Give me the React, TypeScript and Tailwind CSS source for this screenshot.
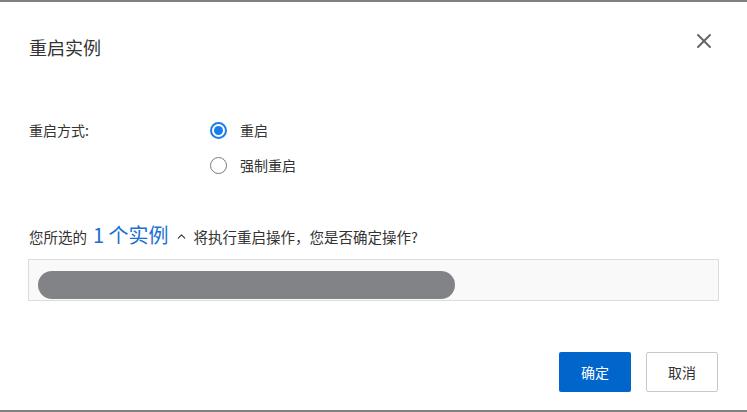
import React from 'react';
import { X, ChevronUp } from 'lucide-react';

const font = { fontFamily: '"Noto Sans CJK SC", "Noto Sans", sans-serif' };

const Radio: React.FC<{ checked?: boolean; label: string }> = ({ checked, label }) => (
  <label className="flex items-center h-[18px]">
    <span
      className={`w-[17px] h-[17px] rounded-full border flex items-center justify-center ${
        checked ? 'border-[#1a7fe8] border-2' : 'border-[#7a7a7a]'
      }`}
    >
      {checked && <span className="w-[9px] h-[9px] rounded-full bg-[#1a7fe8]" />}
    </span>
    <span className="ml-[13px] text-[14px] text-[#333]">{label}</span>
  </label>
);

export default function App() {
  return (
    <div className="w-[747px] h-[412px] bg-[#808080] flex flex-col overflow-hidden" style={font}>
      <div className="mt-[2px] mb-[2px] flex-1 bg-white flex flex-col">
        {/* Header */}
        <div className="flex items-center justify-between pl-[29px] pr-[31px] pt-[34px]">
          <h2 className="text-[18px] leading-[22px] text-[#333] font-normal">重启实例</h2>
          <X size={24} strokeWidth={2} className="text-[#666] -mt-[12px]" />
        </div>

        {/* Restart mode */}
        <div className="flex pl-[29px] mt-[63px]">
          <div className="w-[181px] text-[14px] text-[#333] leading-[18px]">重启方式:</div>
          <div className="flex flex-col gap-[17px]">
            <Radio checked label="重启" />
            <Radio label="强制重启" />
          </div>
        </div>

        {/* Confirm text */}
        <div className="pl-[29px] mt-[49px] flex items-end text-[14.5px] text-[#333] leading-[20px]">
          <span>您所选的</span>
          <span className="text-[20px] leading-[24px] text-[#1a6fd1] mx-[6px]">1 个实例</span>
          <ChevronUp size={13} strokeWidth={2} className="text-[#333] mb-[4px]" />
          <span className="ml-[6px]">将执行重启操作，您是否确定操作?</span>
        </div>

        {/* Instance box */}
        <div className="mx-[28px] mt-[12px] h-[42px] bg-[#f9f9f9] border border-[#dcdcdc] flex items-center pl-[9px]">
          <div className="w-[417px] h-[28px] mt-[9px] rounded-full bg-[#828387]" />
        </div>

        {/* Footer */}
        <div className="flex justify-end gap-[15px] pr-[29px] mt-[51px]">
          <button className="w-[72px] h-[40px] rounded-[2px] bg-[#0066cc] text-white text-[14px]">确定</button>
          <button className="w-[72px] h-[40px] rounded-[2px] bg-white border border-[#c8c8c8] text-[#333] text-[14px]">
            取消
          </button>
        </div>
      </div>
    </div>
  );
}
